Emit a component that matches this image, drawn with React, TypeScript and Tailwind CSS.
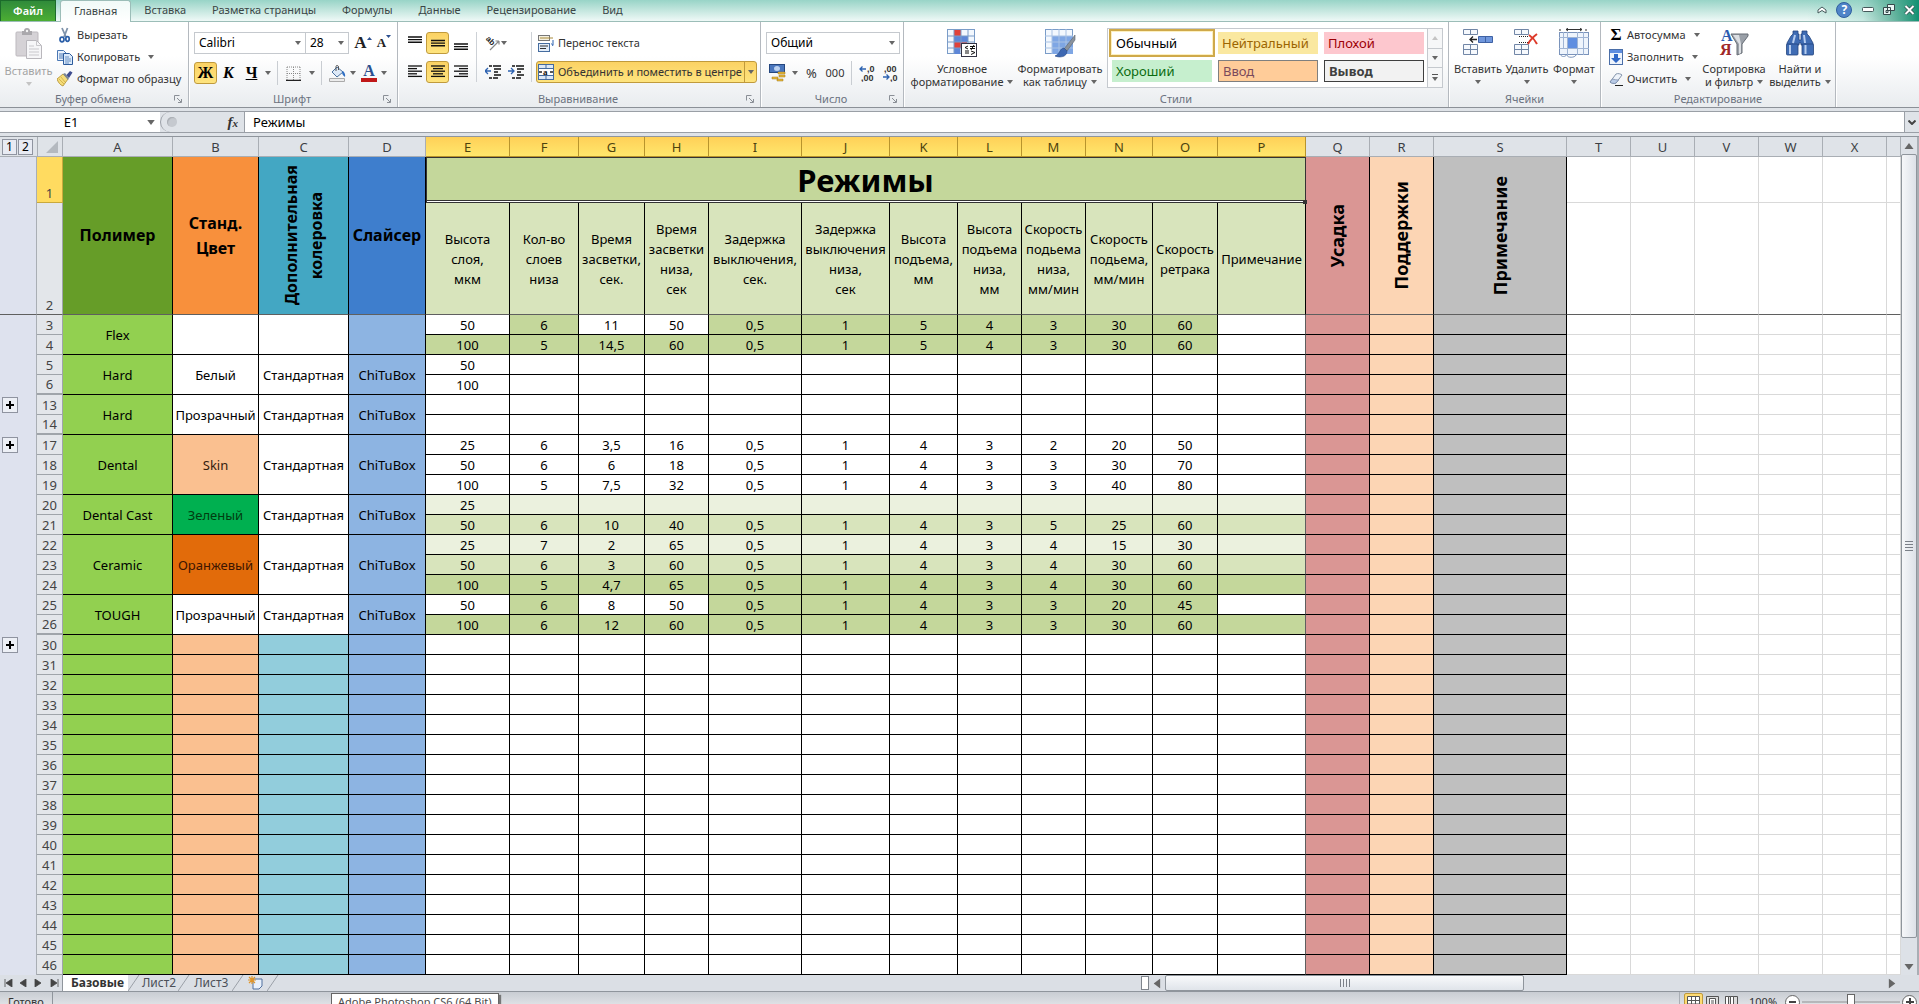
import type { ReactNode } from "react";
import clsx from "clsx";

/* ---------- small shared pieces ---------- */

function Caret({ className = "" }: { className?: string }) {
  return (
    <svg viewBox="0 0 6 4" className={clsx("h-1 w-1.5 shrink-0 fill-[#666]", className)} aria-hidden="true">
      <path d="M0 0h6L3 4z" />
    </svg>
  );
}

function Sep() {
  return <span className="mx-1 h-6 w-px shrink-0 bg-[#c9cdd2]" />;
}

function Group({ title, launcher, className, children }: { title: string; launcher?: boolean; className: string; children: ReactNode }) {
  return (
    <section aria-label={title} className={clsx("flex shrink-0 flex-col border-r border-[#b4b9bf] shadow-[1px_0_0_#fff]", className)}>
      <div className="flex h-[69px] min-w-0">{children}</div>
      <div className="flex h-4 items-center justify-center pl-3 text-[11px] leading-4 text-[#6b7280]">
        <span className="flex-1 text-center">{title}</span>
        {launcher ? (
          <button aria-label={`${title}: параметры`} className="mr-1.5 size-2">
            <svg viewBox="0 0 8 8" fill="none" stroke="#8a8f96" className="size-2">
              <path d="M.5 5.5v-5h5M3 3l4 4M7.5 4v3.5H4" />
            </svg>
          </button>
        ) : (
          <span className="w-3" />
        )}
      </div>
    </section>
  );
}

function SmallButton({ icon, label, caret, className }: { icon: ReactNode; label: string; caret?: boolean; className?: string }) {
  return (
    <button className={clsx("flex h-[22px] items-center gap-1 whitespace-nowrap text-[11px] leading-4", className)}>
      {icon}
      {label}
      {caret && <Caret className="ml-1" />}
    </button>
  );
}

function BigButton({ icon, lines, className, muted }: { icon: ReactNode; lines: string[]; className: string; muted?: boolean }) {
  return (
    <button className={clsx("flex shrink-0 flex-col items-center whitespace-nowrap pt-1.5 text-[11px] leading-[13px]", muted && "text-[#a3a3a3]", className)}>
      {icon}
      <span className="mt-1">{lines[0]}</span>
      <span className="flex h-[13px] items-center gap-1">
        {lines[1]}
        <Caret className={muted ? "fill-[#c4c4c4]" : ""} />
      </span>
    </button>
  );
}

function Tool({ label, active, className, children }: { label: string; active?: boolean; className?: string; children: ReactNode }) {
  return (
    <button
      aria-label={label}
      className={clsx(
        "flex h-[22px] shrink-0 items-center justify-center gap-1 rounded-[3px] border",
        active ? "border-[#c09a3c] bg-linear-to-b from-[#fbd264] to-[#fee47e]" : "border-transparent",
        className ?? "w-[23px]",
      )}
    >
      {children}
    </button>
  );
}

function Combo({ label, value, className }: { label: string; value: string; className: string }) {
  return (
    <div className={clsx("relative h-[22px] border border-[#c5c9ce] bg-white", className)}>
      <select aria-label={label} className="block h-full w-full appearance-none bg-transparent pl-1 text-[12px] leading-5 text-black outline-none">
        <option>{value}</option>
      </select>
      <Caret className="pointer-events-none absolute right-1 top-2" />
    </div>
  );
}

/* ---------- icons ---------- */

const PasteIcon = () => (
  <svg viewBox="0 0 28 32" className="h-8 w-7">
    <rect x="1" y="4" width="22" height="24" rx="1" fill="#d5d2d6" stroke="#bdb9be" />
    <path d="M7 3h2a3 3 0 0 1 6 0h2v4H7z" fill="#aaa8ac" />
    <circle cx="12" cy="3" r="1.2" fill="#f4f4f4" />
    <path d="M11.500 12.500h10l5 5v13h-15z" fill="#f6f6f8" stroke="#b9b7bc" />
    <path d="M21.500 12.500v5h5M14 18h5M14 21h10M14 24h10M14 27h10" fill="none" stroke="#c9c8cc" />
  </svg>
);

const CutIcon = () => (
  <svg viewBox="0 0 16 16" className="size-4" fill="none">
    <path d="M5 1l4 9M10.500 1L7 10" stroke="#7f93ab" strokeWidth="1.800" />
    <ellipse cx="5" cy="12.500" rx="2" ry="2.300" stroke="#2b5fa8" strokeWidth="1.700" />
    <ellipse cx="10.500" cy="12" rx="1.700" ry="2.300" stroke="#2b5fa8" strokeWidth="1.700" />
  </svg>
);

const CopyIcon = () => (
  <svg viewBox="0 0 16 16" className="size-4">
    <path d="M.5 1.500h6l3 3v7h-9z" fill="#eaf2fc" stroke="#4a78b5" />
    <path d="M2 5h4M2 7h5M2 9h5" stroke="#4a78b5" />
    <path d="M6.500 4.500h6l3 3v8h-9z" fill="#dceafa" stroke="#2c5b9c" />
    <path d="M8 8h4M8 10h6M8 12h6M8 14h4" stroke="#4a78b5" strokeWidth=".8" />
  </svg>
);

const BrushIcon = () => (
  <svg viewBox="0 0 16 16" className="size-4">
    <path d="M0 8l6-5 5 5-5 7c-3-1-5-4-6-7z" fill="#f5dd7a" stroke="#b08d2a" strokeWidth=".8" />
    <path d="M2 8l5 5M4 6l4 5" stroke="#c9a43a" strokeWidth=".7" />
    <path d="M6 3l2-1 4 5-1 2z" fill="#7b8796" />
    <path d="M9.500 4L13 0l2.500 1.500L12 7z" fill="#3f4d8f" />
  </svg>
);

const BordersIcon = () => (
  <svg viewBox="0 0 15 15" className="size-[15px]" fill="none">
    <path d="M1 1h13M1 7.500h13M1 1v13M7.500 1v13M14 1v13" stroke="#888" strokeDasharray="1 1" />
    <path d="M0 14.500h15" stroke="#222" strokeWidth="1.500" />
  </svg>
);

const FillIcon = () => (
  <svg viewBox="0 0 17 17" className="size-[17px]">
    <path d="M3 7l5-5 6 5-6 5z" fill="#dde9f7" stroke="#49719f" />
    <path d="M7 6V1.500C7 0 9.500 0 9.500 2v3" fill="none" stroke="#555" />
    <path d="M14 6c2 2 2.500 4 2 6-1-1-3-2-3-5z" fill="#2f6fc4" />
    <path d="M.5 13.500h15v3H.5z" fill="#ececec" stroke="#aaa" />
  </svg>
);

type Bars = [number, number][];
function Lines({ rows }: { rows: Bars }) {
  return (
    <svg viewBox="0 0 14 14" className="size-3.5" stroke="#111" strokeWidth="1.300">
      {rows.map(([a, b], i) => (
        <path key={i} d={`M${a} ${i * 2.6 + 1}H${b}`} />
      ))}
    </svg>
  );
}

function VLines({ y }: { y: number }) {
  return (
    <svg viewBox="0 0 14 18" className="h-[18px] w-3.5" stroke="#111" strokeWidth="1.400">
      <path d={`M0 ${y}h14M0 ${y + 2.6}h14M0 ${y + 5.2}h14`} />
    </svg>
  );
}

function Indent({ back }: { back?: boolean }) {
  return (
    <svg viewBox="0 0 16 14" className="h-3.5 w-4" stroke="#111" strokeWidth="1.300" fill="none">
      <path d="M4 1h3M8 1h8M9 4h7M9 7h4M9 10h7M4 13h3M8 13h5" />
      <path d={back ? "M0 6h6M3 3L0 6l3 3" : "M0 6h6M3 3l3 3-3 3"} stroke="#2d62b0" />
    </svg>
  );
}

const OrientIcon = () => (
  <svg viewBox="0 0 16 16" className="size-4">
    <text x="1" y="7" transform="rotate(45 4 5)" fontSize="8" fontWeight="bold" fontFamily="Liberation Sans, sans-serif" fill="#222">ab</text>
    <path d="M5 15l9-9M14 6v3.500M14 6h-3.500" stroke="#888" strokeWidth="1.200" fill="none" />
  </svg>
);

const WrapIcon = () => (
  <svg viewBox="0 0 16 17" className="h-[17px] w-4" fill="none">
    <rect x=".5" y=".5" width="11" height="5" fill="#f4f0e0" stroke="#777" />
    <path d="M2 3h13" stroke="#a88a3a" />
    <rect x=".5" y="8.500" width="11" height="8" fill="#e3edf9" stroke="#456c9f" />
    <path d="M2 11h8M2 13.500h6" stroke="#333" />
    <path d="M15 5v5M13.500 8.500L15 11" stroke="#2d62b0" />
  </svg>
);

const MergeIcon = () => (
  <svg viewBox="0 0 16 16" className="size-4" fill="none">
    <rect x=".5" y=".5" width="15" height="15" fill="#dce8f7" stroke="#456c9f" />
    <path d="M0 4.500h16M0 11.500h16M8 0v4M8 12v4" stroke="#456c9f" />
    <rect x="1" y="5" width="14" height="6" fill="#fff" />
    <path d="M1 8h3M15 8h-3" stroke="#222" strokeWidth="1.500" />
    <text x="5" y="11" fontSize="9" fontWeight="bold" fontFamily="Liberation Serif, serif" fill="#111">a</text>
  </svg>
);

const MoneyIcon = () => (
  <svg viewBox="0 0 17 18" className="h-[18px] w-[17px]">
    <rect x=".5" y=".5" width="15" height="8" fill="#4a76bd" stroke="#25477f" />
    <ellipse cx="8" cy="4.500" rx="3" ry="2.500" fill="#bdd2f0" />
    <path d="M9 8h7v2H9zM10 11h6v2h-6zM3 13h6v2H3zM8 15h6v2H8z" fill="#e7b83c" stroke="#a37a16" strokeWidth=".5" />
  </svg>
);

function Decimal({ grow }: { grow?: boolean }) {
  return (
    <svg viewBox="0 0 17 18" className="h-[18px] w-[17px]" fontFamily="Liberation Sans, sans-serif" fontWeight="bold" fontSize="9" fill="#333">
      <text x={grow ? 8 : 2} y="8">{grow ? ",0" : ",00"}</text>
      <text x={grow ? 2 : 8} y="17">{grow ? ",00" : ",0"}</text>
      <path d={grow ? "M7 5H1M3.500 2.500L1 5l2.500 2.500" : "M1 13h6M4.500 10.500L7 13l-2.500 2.500"} stroke="#2d62b0" fill="none" strokeWidth="1.300" />
    </svg>
  );
}

const CondIcon = () => (
  <svg viewBox="0 0 32 30" className="h-[30px] w-8">
    <rect x="1.500" y="1.500" width="27" height="24" fill="#f3f8fe" stroke="#7a9cc8" />
    <path d="M8 2h7v6H8zM8 14h13v6H8z" fill="#e0413a" />
    <path d="M8 8h14v6H8zM8 20h6v6H8z" fill="#5d86d8" />
    <path d="M1 8h28M1 14h28M1 20h28M8 1v25M15 1v25M22 1v25" stroke="#7a9cc8" fill="none" />
    <rect x="15.500" y="15.500" width="15" height="13" fill="#fff" stroke="#334" />
    <path d="M22 18l-3 1.500 3 1.500M19 23h4M19 25h4M24 18.500h5M24 20.500h5M28 17l-3 5M25 23l4 1.500-4 2" stroke="#111" fill="none" />
  </svg>
);

const TableFmtIcon = () => (
  <svg viewBox="0 0 32 30" className="h-[30px] w-8">
    <rect x="1.500" y="1.500" width="27" height="24" fill="#f3f8fe" stroke="#7a9cc8" />
    <path d="M8 8h21v18H8z" fill="#7ea6e4" />
    <path d="M1 8h28M1 14h28M1 20h28M8 1v25M15 1v25M22 1v25" stroke="#a9c2e4" fill="none" />
    <path d="M31 7L20 21l3 2 8-11z" fill="#8a929c" stroke="#5d646e" strokeWidth=".6" />
    <path d="M20 20c-4 0-4 6-9 8 5 2 12 1 12-5z" fill="#3d68b2" stroke="#274a86" strokeWidth=".6" />
  </svg>
);

const InsertIcon = () => (
  <svg viewBox="0 0 32 30" className="h-[30px] w-8" fill="#f6f9fd" stroke="#7186a6">
    <path d="M1.500 1.500h14v5h-14zM8.500 1.500v5M1.500 16.500h14v10h-14zM8.500 16.500v10M1.500 21.500h14" />
    <path d="M16.500 8.500h14v6h-14z" fill="#6f96dc" stroke="#3f62a4" />
    <path d="M23.500 8.500v6" stroke="#3f62a4" />
    <path d="M15 11.500H8M11 8.500l-3 3 3 3" stroke="#222" strokeWidth="1.300" fill="none" />
  </svg>
);

const DeleteIcon = () => (
  <svg viewBox="0 0 32 30" className="h-[30px] w-8" fill="#f6f9fd" stroke="#7186a6">
    <path d="M3.500 1.500h14v5h-14zM10.500 1.500v5M3.500 16.500h14v10h-14zM10.500 16.500v10M3.500 21.500h14" />
    <path d="M8 8.500h10M8 14.500h10" stroke="#222" strokeDasharray="1 1" />
    <path d="M18 7c3 2 6 5 8 9M26 6c-4 3-7 6-9 10" stroke="#dd3a2a" strokeWidth="2" fill="none" />
  </svg>
);

const FormatIcon = () => (
  <svg viewBox="0 0 32 30" className="h-[30px] w-8">
    <path d="M2 1v2M28 1v2M8 1.500h16M10 0L8 1.500 10 3M22 0l2 1.500L22 3" stroke="#333" fill="none" />
    <rect x="1.500" y="4.500" width="29" height="22" fill="#eef4fc" stroke="#7a93bb" />
    <rect x="10" y="10" width="9" height="10" fill="#5f8ee0" />
    <path d="M1 9.500h30M1 20.500h30M9.500 4v23M19.500 4v23M25.500 4v23M5.500 4v17" stroke="#9fb4d4" fill="none" />
    <path d="M3 27c0 2 5 2 5 0M9 27c0 3 8 3 9 0" stroke="#7a93bb" fill="none" />
  </svg>
);

const FillDownIcon = () => (
  <svg viewBox="0 0 14 16" className="h-4 w-3.5">
    <rect x=".5" y=".5" width="13" height="15" fill="#eef4fc" stroke="#4a6ea8" />
    <path d="M1 1h12v3H1z" fill="#5f8ee0" />
    <path d="M5 5h4v4h3l-5 5-5-5h3z" fill="#2f67c6" />
  </svg>
);

const EraserIcon = () => (
  <svg viewBox="0 0 14 14" className="size-3.5">
    <path d="M1 10l6-8c2-1 5 0 6 1l-6 8c-2 1-5 0-6-1z" fill="#eef3fa" stroke="#8696ad" />
    <path d="M1 10l2.500-3c2 .5 4 1 6 1l-2.500 3c-2 1-5 0-6-1z" fill="#b9cbe6" stroke="#66799a" strokeWidth=".6" />
    <path d="M6 13.500h8" stroke="#222" />
  </svg>
);

const SortIcon = () => (
  <svg viewBox="0 0 32 30" className="h-[30px] w-8" fontFamily="Liberation Serif, serif" fontSize="16" fontWeight="bold">
    <path d="M13 6h17v2l-6 8v9l-5 2V16z" fill="#9aa0a8" stroke="#666c75" />
    <path d="M15 7h6l2 9v9l-2 1V16z" fill="#dcdfe3" />
    <text x="3" y="13" fill="#2b5bb0">А</text>
    <text x="2" y="27" fill="#a02828">Я</text>
  </svg>
);

const FindIcon = () => (
  <svg viewBox="0 0 32 30" className="h-[30px] w-8" fill="#3f6cb4" stroke="#25457e" strokeWidth=".8">
    <path d="M9 3h5v3h1v6h2V6h1V3h5v3l2 2 4 7v2H17v-2h-2v2H3v-2l4-7 2-2z" />
    <rect x="2.500" y="16" width="11.500" height="11" rx="1" />
    <rect x="18" y="16" width="11.500" height="11" rx="1" />
    <path d="M6 17v9M21.500 17v9M11 7l-2 8M20 7l1 8" stroke="#b6cdf0" strokeWidth="2" />
  </svg>
);

/* ---------- ribbon ---------- */

const tabs = ["Главная", "Вставка", "Разметка страницы", "Формулы", "Данные", "Рецензирование", "Вид"];

function TabBar() {
  return (
    <nav aria-label="Вкладки ленты" className="flex h-[22px] shrink-0 border-b border-[#9cbdb8] bg-linear-to-b from-[#98d4c7] to-[#eff9f7] text-[11px] leading-4 text-[#3a4545]">
      <button className="mr-1 w-14 border border-b-0 border-[#1c6b2b] bg-linear-to-b from-[#2f8b3a] to-[#4cae32] font-semibold text-white">Файл</button>
      {tabs.map((t, i) => (
        <button key={t} className={clsx("whitespace-nowrap px-[13px] pb-0.5", i === 0 && "-mb-px rounded-t-[3px] border border-b-0 border-[#9cbdb8] bg-linear-to-b from-[#f1faf8] to-white")}>
          {t}
        </button>
      ))}
      <div className="ml-auto flex w-28 items-center justify-between bg-linear-to-r from-transparent via-[#8fd0c2]/40 to-[#0f9172] pb-0.5 pl-2.5 pr-1">
        <button aria-label="Свернуть ленту">
          <svg viewBox="0 0 10 8" className="h-2 w-2.5" fill="#fff" stroke="#44585a"><path d="M1 4l4-3 4 3v3L5 4.500 1 7z" /></svg>
        </button>
        <button aria-label="Справка" className="size-4 rounded-full border border-[#2f5f9f] bg-[#4f84c8] text-[12px] font-bold leading-[14px] text-white">?</button>
        <button aria-label="Свернуть">
          <svg viewBox="0 0 12 5" className="h-[5px] w-3" fill="#fff" stroke="#44585a"><rect x=".5" y=".5" width="11" height="4" rx="1" /></svg>
        </button>
        <button aria-label="Восстановить">
          <svg viewBox="0 0 12 11" className="h-[11px] w-3" fill="#e8f6f3" stroke="#35494b"><path d="M4.500.5h7v6h-7zM.5 3.500h7v7h-7zM3 6.500h2v2H3z" /></svg>
        </button>
        <button aria-label="Закрыть">
          <svg viewBox="0 0 11 10" className="h-2.5 w-[11px]"><path d="M1.500 1l8 8M9.500 1l-8 8" stroke="#2e4a48" strokeWidth="3.400" /><path d="M1.500 1l8 8M9.500 1l-8 8" stroke="#fff" strokeWidth="2" /></svg>
        </button>
      </div>
    </nav>
  );
}

const styleCells: [string, string][] = [
  ["Обычный", "bg-white text-black outline-2 outline-offset-1 outline-[#cfa94a] shadow-[0_0_0_2px_#fdf0c0]"],
  ["Нейтральный", "bg-[#fae8a0] text-[#9c6500]"],
  ["Плохой", "bg-[#fdc7ce] text-[#9c0006]"],
  ["Хороший", "bg-[#c6efce] text-[#0b6b10]"],
  ["Ввод", "border border-[#7f7f7f] bg-[#ffcc99] text-[#7a4a5c]"],
  ["Вывод", "border border-[#3f3f3f] bg-[#f2f2f2] font-bold text-[#3f3f3f]"],
];

const leftBars: Bars = [[0, 14], [0, 9], [0, 14], [0, 9], [0, 14]];
const centerBars: Bars = [[0, 14], [2, 12], [0, 14], [2, 12], [0, 14]];
const rightBars: Bars = [[0, 14], [5, 14], [0, 14], [5, 14], [0, 14]];

function Ribbon() {
  return (
    <div className="flex h-[86px] shrink-0 overflow-hidden border-b border-[#8b9097] bg-linear-to-b from-white from-40% to-[#e9ecef] text-[#333]">
      <Group title="Буфер обмена" launcher className="w-[189px]">
        <BigButton muted className="w-[57px]" lines={["Вставить", ""]} icon={<PasteIcon />} />
        <div className="flex flex-col items-start pt-0.5">
          <SmallButton icon={<CutIcon />} label="Вырезать" />
          <SmallButton icon={<CopyIcon />} label="Копировать" caret />
          <SmallButton icon={<BrushIcon />} label="Формат по образцу" />
        </div>
      </Group>

      <Group title="Шрифт" launcher className="w-[209px]">
        <div className="flex flex-col gap-[7px] pl-[5px] pt-2.5">
          <div className="flex items-center">
            <Combo label="Шрифт" value="Calibri" className="w-[112px]" />
            <Combo label="Размер шрифта" value="28" className="-ml-px w-[44px]" />
            <Tool label="Увеличить размер" className="ml-1 w-5">
              <span className="flex font-['Liberation_Serif',serif] text-[17px] font-bold leading-5 text-[#222]">A<svg viewBox="0 0 5 3" className="mt-1 h-[3px] w-[5px] fill-[#2b4f8f]"><path d="M0 3h5L2.500 0z" /></svg></span>
            </Tool>
            <Tool label="Уменьшить размер" className="ml-0.5 w-[18px]">
              <span className="flex font-['Liberation_Serif',serif] text-[13px] font-bold leading-5 text-[#222]">A<svg viewBox="0 0 5 3" className="mt-0.5 h-[3px] w-[5px] fill-[#2b4f8f]"><path d="M0 0h5L2.500 3z" /></svg></span>
            </Tool>
          </div>
          <div className="flex items-center font-['Liberation_Serif',serif] text-[16px] font-bold leading-5 text-black">
            <Tool label="Полужирный" active>Ж</Tool>
            <Tool label="Курсив"><i>К</i></Tool>
            <Tool label="Подчеркнутый"><u>Ч</u></Tool>
            <Tool label="Вид подчеркивания" className="w-2.5"><Caret /></Tool>
            <Sep />
            <Tool label="Границы" className="ml-0.5 w-[33px]"><BordersIcon /><Caret className="ml-1" /></Tool>
            <Sep />
            <Tool label="Цвет заливки" className="w-[32px]"><FillIcon /><Caret /></Tool>
            <Tool label="Цвет текста" className="w-[32px]">
              <span className="flex flex-col items-center"><span className="text-[16px] leading-[14px] text-[#2b4f8f]">A</span><span className="h-1 w-4 bg-[#c01818]" /></span>
              <Caret />
            </Tool>
          </div>
        </div>
      </Group>

      <Group title="Выравнивание" launcher className="w-[363px]">
        <div className="flex flex-col gap-[7px] pl-[5px] pt-2.5">
          <div className="flex items-center">
            <Tool label="По верхнему краю"><VLines y={3} /></Tool>
            <Tool label="По середине" active><VLines y={6.5} /></Tool>
            <Tool label="По нижнему краю"><VLines y={10} /></Tool>
          </div>
          <div className="flex items-center">
            <Tool label="По левому краю"><Lines rows={leftBars} /></Tool>
            <Tool label="По центру" active><Lines rows={centerBars} /></Tool>
            <Tool label="По правому краю"><Lines rows={rightBars} /></Tool>
          </div>
        </div>
        <span className="mt-2.5 ml-1 h-[50px] w-px bg-[#cdd1d6]" />
        <div className="flex flex-col gap-[7px] pl-1 pt-2.5">
          <Tool label="Ориентация" className="w-[29px]"><OrientIcon /><Caret className="-ml-1" /></Tool>
          <div className="flex">
            <Tool label="Уменьшить отступ"><Indent back /></Tool>
            <Tool label="Увеличить отступ"><Indent /></Tool>
          </div>
        </div>
        <span className="mt-2.5 ml-1 h-[50px] w-px bg-[#cdd1d6]" />
        <div className="flex flex-col gap-[7px] pl-1 pt-2.5">
          <SmallButton className="pl-0.5" icon={<WrapIcon />} label="Перенос текста" />
          <div className="flex h-[22px] rounded-[3px] border border-[#c09a3c] bg-linear-to-b from-[#fbd264] to-[#fee47e]">
            <SmallButton className="-mt-px w-[207px] pl-px" icon={<MergeIcon />} label="Объединить и поместить в центре" />
            <button aria-label="Варианты объединения" className="flex w-3 items-center justify-center border-l border-[#c09a3c]"><Caret /></button>
          </div>
        </div>
      </Group>

      <Group title="Число" launcher className="w-[143px]">
        <div className="flex flex-col gap-[7px] pl-[5px] pt-2.5">
          <Combo label="Числовой формат" value="Общий" className="w-[134px]" />
          <div className="flex items-center text-[13px] leading-5">
            <Tool label="Денежный формат" className="w-[34px]"><MoneyIcon /><Caret className="ml-0.5" /></Tool>
            <Tool label="Процентный формат">%</Tool>
            <Tool label="Формат с разделителями" className="w-6"><span className="text-[11px]">000</span></Tool>
            <Sep />
            <Tool label="Увеличить разрядность"><Decimal grow /></Tool>
            <Tool label="Уменьшить разрядность"><Decimal /></Tool>
          </div>
        </div>
      </Group>

      <Group title="Стили" className="w-[545px]">
        <BigButton className="ml-1.5 w-[104px]" lines={["Условное", "форматирование"]} icon={<CondIcon />} />
        <BigButton className="w-[92px]" lines={["Форматировать", "как таблицу"]} icon={<TableFmtIcon />} />
        <div className="ml-px mt-1.5 flex h-[60px] w-[336px] border border-[#c5c9ce] bg-white">
          <div className="grid flex-1 grid-cols-[100px_100px_100px] grid-rows-[22px_22px] gap-x-[6px] gap-y-[6px] py-[3px] pl-1 text-[13px] leading-5">
            {styleCells.map(([n, c]) => (
              <button key={n} className={clsx("pl-1 text-left", c)}>{n}</button>
            ))}
          </div>
          <div className="flex w-[15px] flex-col divide-y divide-[#c5c9ce] border-l border-[#c5c9ce] bg-[#f6f7f8]">
            <button aria-label="Прокрутить вверх" className="flex flex-1 items-center justify-center"><Caret className="rotate-180 fill-[#c4c4c4]" /></button>
            <button aria-label="Прокрутить вниз" className="flex flex-1 items-center justify-center"><Caret /></button>
            <button aria-label="Все стили" className="flex flex-1 flex-col items-center justify-center gap-0.5"><span className="h-px w-1.5 bg-[#555]" /><Caret /></button>
          </div>
        </div>
      </Group>

      <Group title="Ячейки" className="w-[152px]">
        <BigButton className="ml-1 w-[50px]" lines={["Вставить", ""]} icon={<InsertIcon />} />
        <BigButton className="w-[48px]" lines={["Удалить", ""]} icon={<DeleteIcon />} />
        <BigButton className="w-[46px]" lines={["Формат", ""]} icon={<FormatIcon />} />
      </Group>

      <Group title="Редактирование" className="w-[235px]">
        <div className="flex w-[98px] flex-col items-start pl-2 pt-0.5">
          <SmallButton icon={<span className="w-3.5 text-center font-['Liberation_Serif',serif] text-[17px] font-bold text-black">Σ</span>} label="Автосумма" caret />
          <SmallButton icon={<FillDownIcon />} label="Заполнить" caret />
          <SmallButton icon={<EraserIcon />} label="Очистить" caret />
        </div>
        <BigButton className="w-[70px]" lines={["Сортировка", "и фильтр"]} icon={<SortIcon />} />
        <BigButton className="w-[62px]" lines={["Найти и", "выделить"]} icon={<FindIcon />} />
      </Group>
    </div>
  );
}

function FormulaBar() {
  return (
    <div className="flex h-[29px] shrink-0 flex-col border-b border-[#8f959c] bg-[#dfe3e8] pb-1 pt-[3px]">
      <div className="flex h-[22px] border-y border-[#9a9fa6] text-[13px] leading-5 text-black">
        <input aria-label="Имя ячейки" defaultValue="E1" className="w-[142px] bg-white text-center outline-none" />
        <button aria-label="Список имён" className="flex w-[18px] items-center justify-center bg-white"><Caret className="h-[5px] w-2 fill-[#333]" /></button>
        <div className="flex w-[85px] items-center justify-between rounded-l-full border-x border-[#9a9fa6] bg-[#dfe3e8] pl-1.5 pr-1.5">
          <span className="size-2.5 rounded-full bg-[#c5c9cf] shadow-[inset_1px_1px_1px_#a9adb3]" />
          <button className="font-['Liberation_Serif',serif] text-[15px] font-bold italic leading-5 text-[#333]">f<span className="text-[11px]">x</span></button>
        </div>
        <input aria-label="Строка формул" defaultValue="Режимы" className="min-w-0 flex-1 bg-white pl-2 outline-none" />
        <button aria-label="Развернуть строку формул" className="flex w-[15px] items-center justify-center border-l border-[#9a9fa6]">
          <svg viewBox="0 0 8 5" className="h-[5px] w-2" fill="none" stroke="#444" strokeWidth="2"><path d="M.5.5L4 4 7.500.5" /></svg>
        </button>
      </div>
    </div>
  );
}

/* ---------- sheet ---------- */

const cols: [string, string][] = [
  ["A", "w-[110px]"], ["B", "w-[86px]"], ["C", "w-[90px]"], ["D", "w-[77px]"], ["E", "w-[84px]"], ["F", "w-[69px]"],
  ["G", "w-[66px]"], ["H", "w-[64px]"], ["I", "w-[93px]"], ["J", "w-[88px]"], ["K", "w-[68px]"], ["L", "w-[64px]"],
  ["M", "w-[64px]"], ["N", "w-[67px]"], ["O", "w-[65px]"], ["P", "w-[88px]"], ["Q", "w-[64px]"], ["R", "w-[64px]"],
  ["S", "w-[133px]"], ["T", "w-[64px]"], ["U", "w-[64px]"], ["V", "w-[64px]"], ["W", "w-[64px]"], ["X", "w-[64px]"], ["", ""],
];

const modes = [
  "Высота слоя, мкм", "Кол-во слоев низа", "Время засветки, сек.", "Время засветки низа, сек", "Задержка выключения, сек.",
  "Задержка выключения низа, сек", "Высота подъема, мм", "Высота подъема низа, мм", "Скорость подьема низа, мм/мин",
  "Скорость подьема, мм/мин", "Скорость ретрака", "Примечание",
];

const G = "bg-[#c4d79b]";
const L = "bg-[#d8e4bc]";
const X = "bg-[#ebf1de]";
const W = "bg-white";

type Row = { n: number; v: string[]; f: string[]; group?: { span: number; cells: [string, string][] } };
const all = (c: string) => Array<string>(12).fill(c);
const mixed = [W, G, W, W, G, G, G, G, G, G, G, W];
const green = [...Array<string>(11).fill(G), W];
const none: string[] = [];
const std: [string, string] = ["Стандартная", W];
const slicer: [string, string] = ["ChiTuBox", "bg-[#8db4e2]"];
const poly = (s: string): [string, string] => [s, "bg-[#92d050]"];

const rows: Row[] = [
  { n: 3, v: "50 6 11 50 0,5 1 5 4 3 30 60".split(" "), f: mixed, group: { span: 2, cells: [poly("Flex"), ["", W], ["", W], ["", "bg-[#8db4e2]"]] } },
  { n: 4, v: "100 5 14,5 60 0,5 1 5 4 3 30 60".split(" "), f: green },
  { n: 5, v: ["50"], f: all(W), group: { span: 2, cells: [poly("Hard"), ["Белый", W], std, slicer] } },
  { n: 6, v: ["100"], f: all(W) },
  { n: 13, v: none, f: all(W), group: { span: 2, cells: [poly("Hard"), ["Прозрачный", W], std, slicer] } },
  { n: 14, v: none, f: all(W) },
  { n: 17, v: "25 6 3,5 16 0,5 1 4 3 2 20 50".split(" "), f: all(W), group: { span: 3, cells: [poly("Dental"), ["Skin", "bg-[#fac090] text-[#33200f]"], std, slicer] } },
  { n: 18, v: "50 6 6 18 0,5 1 4 3 3 30 70".split(" "), f: all(W) },
  { n: 19, v: "100 5 7,5 32 0,5 1 4 3 3 40 80".split(" "), f: all(W) },
  { n: 20, v: ["25"], f: all(X), group: { span: 2, cells: [poly("Dental Cast"), ["Зеленый", "bg-[#00b050] text-[#003d10]"], std, slicer] } },
  { n: 21, v: "50 6 10 40 0,5 1 4 3 5 25 60".split(" "), f: all(L) },
  { n: 22, v: "25 7 2 65 0,5 1 4 3 4 15 30".split(" "), f: all(X), group: { span: 3, cells: [poly("Ceramic"), ["Оранжевый", "bg-[#e26b0a] text-[#3d1500]"], std, slicer] } },
  { n: 23, v: "50 6 3 60 0,5 1 4 3 4 30 60".split(" "), f: all(L) },
  { n: 24, v: "100 5 4,7 65 0,5 1 4 3 4 30 60".split(" "), f: all(G) },
  { n: 25, v: "50 6 8 50 0,5 1 4 3 3 20 45".split(" "), f: mixed, group: { span: 2, cells: [poly("TOUGH"), ["Прозрачный", W], std, slicer] } },
  { n: 26, v: "100 6 12 60 0,5 1 4 3 3 30 60".split(" "), f: all(G) },
  ...Array.from({ length: 17 }, (_, i): Row => ({
    n: 30 + i, v: none, f: all(W),
    group: { span: 1, cells: [poly(""), ["", "bg-[#fac090]"], ["", "bg-[#92cddc]"], ["", "bg-[#8db4e2]"]] },
  })),
];

const cell = "border-b border-r border-black p-0 text-center";
const freeze = "border-b border-b-[#5f5f5f]";
const blank = "border-b border-r border-[#d9d9d9] bg-white p-0";
const headNum = "border-r border-[#9fa4aa] bg-[#e3e6ea] p-0 text-center align-bottom font-normal text-[#444]";

function Vertical({ children }: { children: ReactNode }) {
  return (
    <div className="flex justify-center">
      <div className="rotate-180 whitespace-pre-line font-bold [writing-mode:vertical-rl]">{children}</div>
    </div>
  );
}

function Sheet() {
  return (
    <table className="w-full table-fixed border-separate border-spacing-0 text-[13px] leading-[18px] text-black">
      <colgroup>
        <col className="w-[37px]" />
        <col className="w-[26px]" />
        {cols.map(([n, w]) => <col key={n} className={w} />)}
      </colgroup>
      <thead>
        <tr className="h-5 bg-[#dfe3e8] text-[#3c3f44]">
          <td className="border-b border-[#a9aeb4] p-0">
            <div className="flex gap-px pl-0.5">
              {["1", "2"].map((n) => (
                <button key={n} className="h-4 w-[15px] border border-[#8f94a0] bg-[#e8ebf3] text-[12px] leading-[14px] text-black">{n}</button>
              ))}
            </div>
          </td>
          <th className="border-b border-r border-l border-[#a9aeb4] p-0">
            <button aria-label="Выделить всё" className="block w-full">
              <svg viewBox="0 0 12 12" className="ml-auto mr-1 size-3 fill-[#b4b9bf]"><path d="M12 0v12H0z" /></svg>
            </button>
          </th>
          {cols.map(([n], i) => {
            const on = i >= 4 && i <= 15;
            return (
              <th key={n} scope="col" className={clsx("border-b border-r p-0 font-normal", on ? "border-[#b8942c] bg-linear-to-b from-[#ffd058] to-[#ffe76c] text-[#4d430f]" : "border-[#a9aeb4]")}>{n}</th>
            );
          })}
        </tr>
      </thead>
      <tbody>
        <tr className="h-[46px] text-[16px] leading-[25px]">
          <td className="border-r border-[#a9aeb4] bg-[#dee2ee]" />
          <th scope="row" className="border-b border-r border-[#c9a93c] bg-[#ffdb60] p-0 align-bottom text-[13px] font-normal leading-[18px] text-[#444]">1</th>
          <th rowSpan={2} className={clsx(cell, freeze, "bg-[#669d28]")}>Полимер</th>
          <th rowSpan={2} className={clsx(cell, freeze, "whitespace-pre-line bg-[#f8903c]")}>{"Станд.\nЦвет"}</th>
          <th rowSpan={2} className={clsx(cell, freeze, "bg-[#43a7c3]")}><Vertical>{"Дополнительная\nколеровка"}</Vertical></th>
          <th rowSpan={2} className={clsx(cell, freeze, "bg-[#3e7ecd]")}>Слайсер</th>
          <th colSpan={12} className="relative border-b border-r border-[#333] bg-[#c4d79b] p-0 text-[31px] leading-[44px] shadow-[inset_0_1px_0_#333,inset_1px_0_0_#333,inset_0_-1px_0_#fff,inset_0_-2px_0_#333]">
            Режимы
            <span className="absolute -bottom-0.5 -right-0.5 size-1 bg-[#333]" />
          </th>
          <th rowSpan={2} className={clsx(cell, freeze, "bg-[#da9694] text-[18px]")}><Vertical>Усадка</Vertical></th>
          <th rowSpan={2} className={clsx(cell, freeze, "bg-[#fcd5b4] text-[18px]")}><Vertical>Поддержки</Vertical></th>
          <th rowSpan={2} className={clsx(cell, freeze, "bg-[#bfbfbf] text-[18px]")}><Vertical>Примечание</Vertical></th>
          {cols.slice(19).map(([n]) => <td key={n} className={blank} />)}
        </tr>
        <tr className="h-28">
          <td className={clsx("border-r border-r-[#a9aeb4] bg-[#dee2ee] p-0", freeze)} />
          <th scope="row" className={clsx(headNum, freeze)}>2</th>
          {modes.map((m) => (
            <th key={m} className={clsx(cell, freeze, "whitespace-pre-line bg-[#d8e4bc] font-normal leading-5")}>{m.replaceAll(" ", "\n")}</th>
          ))}
          {cols.slice(19).map(([n]) => <td key={n} className="border-b border-r border-b-[#5f5f5f] border-r-[#d9d9d9] bg-white p-0" />)}
        </tr>
        {rows.map((r) => {
          const gap = r.n === 6 || r.n === 14 || r.n === 26;
          const plus = r.n === 13 || r.n === 17 || r.n === 30;
          return (
            <tr key={r.n} className="h-5">
              <td className="border-r border-[#a9aeb4] bg-[#dee2ee] p-0">
                {plus && (
                  <button aria-label="Развернуть группу" className="ml-0.5 flex h-4 w-4 items-center justify-center border border-[#8f94a0] bg-[#edf0f6]">
                    <svg viewBox="0 0 8 8" className="size-2"><path d="M4 0v8M0 4h8" stroke="#000" strokeWidth="2" /></svg>
                  </button>
                )}
              </td>
              <th scope="row" className={clsx(headNum, gap ? "border-b-2" : "border-b")}>{r.n}</th>
              {r.group?.cells.map(([t, c], i) => <td key={i} rowSpan={r.group!.span} className={clsx(cell, c)}>{t}</td>)}
              {r.f.map((c, i) => <td key={i} className={clsx(cell, c, i === 11 && "border-r-[#5f5f5f]")}>{r.v[i]}</td>)}
              <td className={clsx(cell, "bg-[#da9694]")} />
              <td className={clsx(cell, "bg-[#fcd5b4]")} />
              <td className={clsx(cell, "bg-[#bfbfbf]")} />
              {cols.slice(19).map(([n]) => <td key={n} className={blank} />)}
            </tr>
          );
        })}
      </tbody>
    </table>
  );
}

function VScroll() {
  return (
    <div className="flex w-[18px] shrink-0 flex-col border-r-2 border-[#a9aeb4] bg-[#dde1e7]">
      <button aria-label="Вверх" className="flex h-[17px] items-center justify-center"><Caret className="h-[6px] w-2.5 rotate-180 fill-[#444]" /></button>
      <div className="flex flex-1 flex-col">
        <div className="flex flex-[78] flex-col items-center justify-center gap-0.5 rounded-[2px] border border-[#8f959c] bg-linear-to-r from-[#f6f7f9] to-[#dde1e8]">
          {[0, 1, 2, 3].map((i) => <span key={i} className="h-px w-2 bg-[#7b8088]" />)}
        </div>
        <div className="flex-2" />
      </div>
      <button aria-label="Вниз" className="flex h-[17px] items-center justify-center"><Caret className="h-[6px] w-2.5 fill-[#444]" /></button>
    </div>
  );
}

function Slant() {
  return (
    <svg viewBox="0 0 12 16" className="h-4 w-3 shrink-0" fill="none" stroke="#9ba0a8"><path d="M0 16L11 0" /></svg>
  );
}

function SheetTabs() {
  const nav = ["M3 0v8M10 0L4 4l6 4z", "M8 0L2 4l6 4z", "M2 0l6 4-6 4z", "M9 0v8M2 0l6 4-6 4z"];
  return (
    <div className="flex h-[17px] shrink-0 border-b border-[#8f959c] bg-[#dbdfe5] text-[12px] leading-4 text-[#4b4f57]">
      <div className="flex w-[62px] items-center justify-around">
        {nav.map((d, i) => (
          <button key={i} aria-label={["Первый лист", "Предыдущий лист", "Следующий лист", "Последний лист"][i]}>
            <svg viewBox="0 0 11 8" className="h-2 w-[11px]" fill="#444" stroke="#444"><path d={d} strokeWidth=".8" /></svg>
          </button>
        ))}
      </div>
      <button className="border-l border-[#8f959c] bg-white pl-2 pr-1 font-bold text-[#333]">Базовые</button>
      <Slant />
      <button className="px-0.5">Лист2</button>
      <Slant />
      <button className="ml-1 pr-1">Лист3</button>
      <Slant />
      <button aria-label="Вставить лист" className="mx-1">
        <svg viewBox="0 0 15 14" className="h-3.5 w-[15px]"><path d="M5 3h9v7l-3 3H5z" fill="#e8f0fb" stroke="#51709f" /><path d="M4 0v8M0 4h8M1 1l6 6M7 1L1 7" stroke="#e0952a" strokeWidth="1.200" /></svg>
      </button>
      <Slant />
      <div className="ml-auto flex w-[778px]">
        <span className="my-px w-2 border border-[#7f858d] bg-white" />
        <button aria-label="Влево" className="flex w-4 items-center justify-center"><Caret className="h-[7px] w-2.5 rotate-90 fill-[#444]" /></button>
        <div className="flex flex-1">
          <div className="flex w-1/2 items-center justify-center gap-0.5 rounded-[2px] border border-[#8f959c] bg-linear-to-b from-[#f8f9fb] to-[#e0e4ea]">
            {[0, 1, 2, 3].map((i) => <span key={i} className="h-2 w-px bg-[#7b8088]" />)}
          </div>
        </div>
        <button aria-label="Вправо" className="mr-[18px] flex w-[18px] items-center justify-center"><Caret className="h-[7px] w-2.5 -rotate-90 fill-[#444]" /></button>
      </div>
    </div>
  );
}

function StatusBar() {
  const view = "flex h-[18px] w-[19px] items-center justify-center rounded-[2px] border";
  return (
    <footer className="relative flex h-5 shrink-0 items-center bg-linear-to-b from-[#c9cdd3] to-[#eceef1] pl-2 text-[11px] text-[#333]">
      <span>Готово</span>
      <span className="ml-2 h-full w-px bg-[#8f959c]" />
      <div role="tooltip" className="absolute left-[331px] top-px whitespace-nowrap border border-[#666] bg-white px-1.5 text-[11px] leading-4 text-[#4b4b4b] shadow-[2px_2px_1px_#777]">Adobe Photoshop CS6 (64 Bit)</div>
      <div className="ml-auto flex h-full w-[240px] items-center border-l border-[#a9aeb4] pl-1">
        <button aria-label="Обычный режим" className={clsx(view, "border-[#c09a3c] bg-[#fedb73]")}>
          <svg viewBox="0 0 13 12" className="h-3 w-[13px]" fill="#fff" stroke="#555"><path d="M.5.5h12v11H.5zM4.500.5v11M8.500.5v11M.5 4.500h12M.5 8h12" /></svg>
        </button>
        <button aria-label="Разметка страницы" className={clsx(view, "border-transparent")}>
          <svg viewBox="0 0 13 12" className="h-3 w-[13px]" fill="#ddd" stroke="#555"><path d="M.5.5h12v11H.5z" /><path d="M3.500 2.500h6v9h-6zM5 5h3M5 7h3" fill="#fff" /></svg>
        </button>
        <button aria-label="Страничный режим" className={clsx(view, "border-transparent")}>
          <svg viewBox="0 0 13 12" className="h-3 w-[13px]" fill="#ddd" stroke="#555"><path d="M.5.5h12v11H.5z" /><path d="M.5.5h3v8h-3zM5.500.5h3v8h-3z" fill="#fff" /></svg>
        </button>
        <span className="ml-2 w-9">100%</span>
        <button aria-label="Уменьшить" className="flex size-[15px] items-center justify-center rounded-full border border-[#666] bg-white"><span className="h-0.5 w-[7px] bg-[#444]" /></button>
        <input
          type="range"
          aria-label="Масштаб"
          defaultValue={50}
          className="mx-0.5 h-4 min-w-0 flex-1 appearance-none bg-linear-to-b from-transparent from-45% via-[#777] via-50% to-transparent to-55% [&::-webkit-slider-thumb]:h-4 [&::-webkit-slider-thumb]:w-2 [&::-webkit-slider-thumb]:appearance-none [&::-webkit-slider-thumb]:border [&::-webkit-slider-thumb]:border-[#666] [&::-webkit-slider-thumb]:bg-white"
        />
        <button aria-label="Увеличить" className="mr-0.5 flex size-[15px] items-center justify-center rounded-full border border-[#666] bg-white">
          <svg viewBox="0 0 8 8" className="size-2"><path d="M4 0v8M0 4h8" stroke="#444" strokeWidth="2" /></svg>
        </button>
      </div>
    </footer>
  );
}

export default function App() {
  return (
    <div className="flex h-screen flex-col overflow-hidden bg-[#dfe3e8] font-['Noto_Sans','Open_Sans',sans-serif]">
      <TabBar />
      <Ribbon />
      <FormulaBar />
      <main className="flex shrink-0">
        <div className="min-w-0 flex-1"><Sheet /></div>
        <VScroll />
      </main>
      <SheetTabs />
      <StatusBar />
    </div>
  );
}
